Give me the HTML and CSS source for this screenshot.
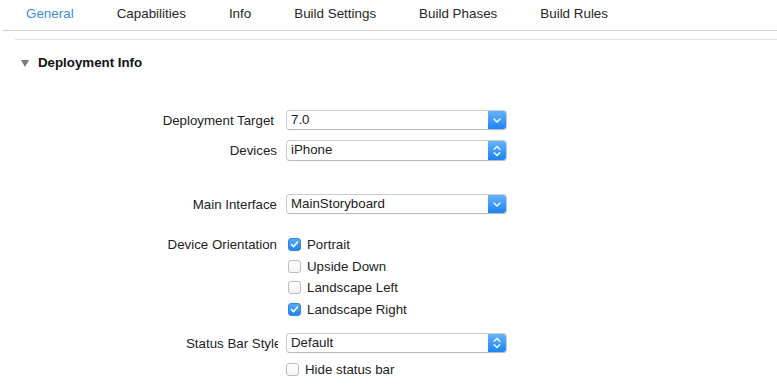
FILE: index.html
```html
<!DOCTYPE html>
<html lang="en">
<head>
    <meta charset="UTF-8">
    <title>General</title>
    <link rel="stylesheet" href="styles.css">
</head>
<body>
    <div class="tabs">
        <span class="tab active">General</span>
        <span class="tab">Capabilities</span>
        <span class="tab">Info</span>
        <span class="tab">Build Settings</span>
        <span class="tab">Build Phases</span>
        <span class="tab">Build Rules</span>
    </div>

    <div class="section">
        <div class="section-header">
            <span class="disclosure"></span>
            <h2>Deployment Info</h2>
        </div>

        <div class="form">
            <div class="row row-target">
                <label>Deployment Target</label>
                <div class="popup">
                    <span class="popup-value">7.0</span>
                    <span class="popup-btn">
                        <svg width="8" height="5" viewBox="0 0 8 5"><path d="M1 1l3 3 3-3" fill="none" stroke="#fff" stroke-width="1.4" stroke-linecap="round" stroke-linejoin="round"/></svg>
                    </span>
                </div>
            </div>

            <div class="row row-devices">
                <label>Devices</label>
                <div class="popup">
                    <span class="popup-value">iPhone</span>
                    <span class="popup-btn">
                        <svg width="8" height="12" viewBox="0 0 8 12"><path d="M1.2 4.2L4 1.5l2.8 2.7M1.2 7.8L4 10.5l2.8-2.7" fill="none" stroke="#fff" stroke-width="1.3" stroke-linecap="round" stroke-linejoin="round"/></svg>
                    </span>
                </div>
            </div>

            <div class="row row-main">
                <label>Main Interface</label>
                <div class="popup">
                    <span class="popup-value">MainStoryboard</span>
                    <span class="popup-btn">
                        <svg width="8" height="5" viewBox="0 0 8 5"><path d="M1 1l3 3 3-3" fill="none" stroke="#fff" stroke-width="1.4" stroke-linecap="round" stroke-linejoin="round"/></svg>
                    </span>
                </div>
            </div>

            <div class="row row-orientation">
                <label>Device Orientation</label>
                <div class="check-list">
                    <div class="check-item"><span class="checkbox checked"></span>Portrait</div>
                    <div class="check-item"><span class="checkbox"></span>Upside Down</div>
                    <div class="check-item"><span class="checkbox"></span>Landscape Left</div>
                    <div class="check-item"><span class="checkbox checked"></span>Landscape Right</div>
                </div>
            </div>

            <div class="row row-status">
                <label><span class="clip">Status Bar Style</span></label>
                <div class="popup">
                    <span class="popup-value">Default</span>
                    <span class="popup-btn">
                        <svg width="8" height="12" viewBox="0 0 8 12"><path d="M1.2 4.2L4 1.5l2.8 2.7M1.2 7.8L4 10.5l2.8-2.7" fill="none" stroke="#fff" stroke-width="1.3" stroke-linecap="round" stroke-linejoin="round"/></svg>
                    </span>
                </div>
            </div>

            <div class="row row-hide">
                <label></label>
                <div class="check-list">
                    <div class="check-item"><span class="checkbox"></span>Hide status bar</div>
                </div>
            </div>
        </div>
    </div>
</body>
</html>
```

FILE: styles.css
```css
* {
    margin: 0;
    padding: 0;
    box-sizing: border-box;
}

body {
    font-family: "Liberation Sans", Arial, sans-serif;
    font-size: 13.3px;
    color: #222;
    background: white;
    overflow: hidden;
}

/* tab bar */
.tabs {
    display: flex;
    align-items: center;
    gap: 43px;
    height: 31px;
    margin-left: 2px;
    padding: 0 0 3px 24px;
    border-bottom: 1px solid #d2d2d2;
    font-size: 13.4px;
}

.tab {
    color: #262626;
}

.tab.active {
    color: #3a8ede;
}

/* deployment info section */
.section {
    margin-top: 8px;
    margin-left: 15px;
    border-top: 1px solid #e0e0e0;
}

.section-header {
    display: flex;
    align-items: center;
    gap: 9px;
    padding: 14px 0 0 6px;
    height: 31px;
}

.section-header h2 {
    font-size: 13.3px;
    font-weight: bold;
    line-height: 16px;
    color: #111;
}

.disclosure {
    width: 0;
    height: 0;
    border-left: 4.5px solid transparent;
    border-right: 4.5px solid transparent;
    border-top: 7px solid #7a7a7a;
    margin-top: 1px;
}

.form {
    padding-top: 39px;
}

.row {
    display: grid;
    grid-template-columns: 262px 221px;
    column-gap: 9px;
    align-items: center;
}

.row label {
    text-align: right;
    color: #222;
    white-space: nowrap;
}

.row-target label {
    margin-right: 3px;
}

.row-devices {
    margin-top: 10px;
}

.row-main {
    margin-top: 33px;
}

.row-orientation {
    margin-top: 20px;
    align-items: start;
}

.row-orientation label {
    line-height: 21.5px;
}

.row-status {
    margin-top: 13px;
}

.row-status label {
    margin-right: -1px;
}

.clip {
    display: inline-block;
    width: 92px;
    overflow: hidden;
    vertical-align: top;
    text-align: left;
}

.row-hide {
    margin-top: 6px;
}

.row-hide .check-list {
    margin-left: -2px;
}

/* popup buttons */
.popup {
    display: flex;
    height: 20px;
    border: 1px solid #cbcbcb;
    border-bottom-color: #bdbdbd;
    border-radius: 4px;
    background: white;
    overflow: hidden;
    box-shadow: 0 1px 0 rgba(0,0,0,0.03);
}

.row-devices .popup {
    height: 21px;
}

.popup-value {
    flex: 1;
    padding-left: 4px;
    line-height: 18px;
    color: #222;
}

.popup-btn {
    width: 18px;
    display: flex;
    align-items: center;
    justify-content: center;
    background: linear-gradient(#66b3fb, #1c83f6);
}

/* checkboxes */
.check-item {
    display: flex;
    align-items: center;
    height: 21.5px;
    gap: 6px;
    color: #222;
}

.checkbox {
    width: 13px;
    height: 13px;
    margin-left: 2px;
    border: 1px solid #bcbcbc;
    border-radius: 3px;
    background: linear-gradient(#fff, #f4f4f4);
}

.checkbox.checked {
    border-color: #2f86ee;
    background-image: url("data:image/svg+xml,%3Csvg xmlns='http://www.w3.org/2000/svg' viewBox='0 0 13 13'%3E%3Cpath d='M3 6.6l2.4 2.6L10 3.6' fill='none' stroke='white' stroke-width='1.8' stroke-linecap='round' stroke-linejoin='round'/%3E%3C/svg%3E"), linear-gradient(#5aacfa, #2283f4);
}
```
